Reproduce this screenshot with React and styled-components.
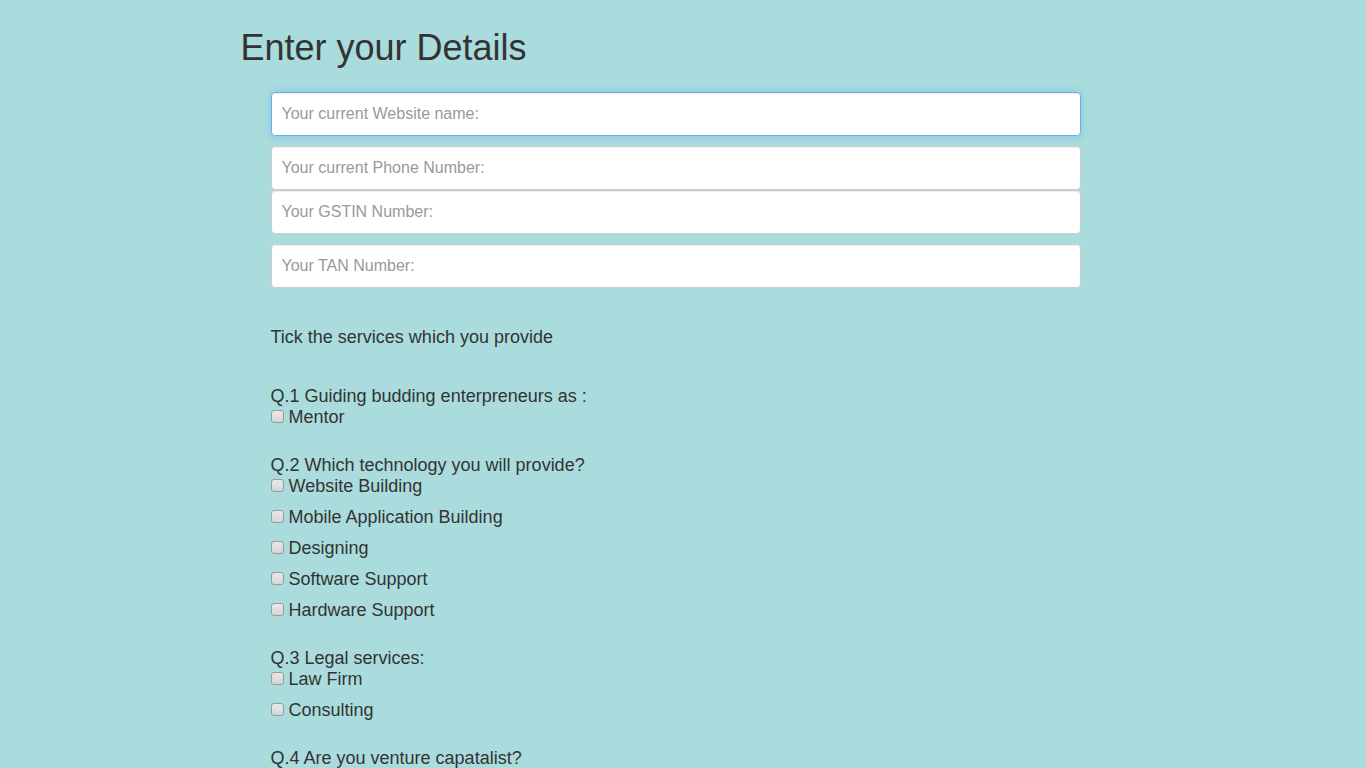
import React from "react";
import styled, { createGlobalStyle, css } from "styled-components";

const GlobalStyle = createGlobalStyle`
  html, body {
    margin: 0;
    padding: 0;
    background: #aadcdd;
  }
  body {
    padding-right: 15px;
    font-family: "Liberation Sans", Arial, Helvetica, sans-serif;
    color: #333333;
  }
  * { box-sizing: border-box; }
`;

const Page = styled.div`
  width: 870px;
  margin: 0 auto;
  padding-bottom: 1080px;
`;

const Title = styled.h1`
  margin: 28px 0 24px 0;
  font-size: 36px;
  font-weight: 400;
  line-height: 39.6px;
  color: #333333;
`;

const Form = styled.form`
  display: flex;
  flex-direction: column;
  padding: 0 30px;
`;

const Field = styled.input`
  display: block;
  width: 100%;
  height: 44px;
  margin: 0 0 ${(p) => p.$gap}px 0;
  padding: 10px 10px;
  font-family: "Liberation Sans", Arial, sans-serif;
  font-size: 16px;
  color: #555555;
  background: #ffffff;
  border: 1px solid #cccccc;
  border-radius: 4px;
  box-shadow: inset 0 1px 1px rgba(0, 0, 0, 0.075);
  outline: none;
  &::placeholder {
    color: #999999;
  }
  ${(p) =>
    p.$focused &&
    css`
      border-color: #66afe9;
      box-shadow: inset 0 1px 1px rgba(0, 0, 0, 0.075),
        0 0 8px rgba(102, 175, 233, 0.6);
    `}
`;

const Intro = styled.p`
  margin: 39px 0 38px 0;
  font-size: 18px;
  line-height: 21px;
`;

const Question = styled.div`
  display: flex;
  flex-direction: column;
  gap: 10px;
  margin-bottom: 27px;
`;

const QuestionText = styled.div`
  font-size: 18px;
  line-height: 21px;
  margin-bottom: -10px;
`;

const Option = styled.label`
  display: flex;
  align-items: center;
  font-size: 18px;
  line-height: 21px;
`;

const Box = styled.input.attrs({ type: "checkbox" })`
  appearance: none;
  -webkit-appearance: none;
  width: 13px;
  height: 13px;
  margin: 0 5px 2px 0;
  border: 1px solid #9a9a9a;
  border-radius: 3px;
  background: linear-gradient(#e8e8e8, #d6d6d6);
  flex: none;
`;

const Submit = styled.button`
  align-self: flex-start;
  padding: 10px 16px;
  font-family: "Liberation Sans", Arial, sans-serif;
  font-size: 18px;
  color: #ffffff;
  background: #337ab7;
  border: 1px solid #2e6da4;
  border-radius: 6px;
`;

const questions = [
  { q: "Q.1 Guiding budding enterpreneurs as :", opts: ["Mentor"] },
  {
    q: "Q.2 Which technology you will provide?",
    opts: [
      "Website Building",
      "Mobile Application Building",
      "Designing",
      "Software Support",
      "Hardware Support",
    ],
  },
  { q: "Q.3 Legal services:", opts: ["Law Firm", "Consulting"] },
  { q: "Q.4 Are you venture capatalist?", opts: ["Yes", "No"] },
];

export default function App() {
  return (
    <>
      <GlobalStyle />
      <Page>
        <Title>Enter your Details</Title>
        <Form onSubmit={(e) => e.preventDefault()}>
          <Field $focused $gap={10} placeholder="Your current Website name:" />
          <Field $gap={0} placeholder="Your current Phone Number:" />
          <Field $gap={10} placeholder="Your GSTIN Number:" />
          <Field $gap={0} placeholder="Your TAN Number:" />
          <Intro>Tick the services which you provide</Intro>
          {questions.map((item) => (
            <Question key={item.q}>
              <QuestionText>{item.q}</QuestionText>
              {item.opts.map((o) => (
                <Option key={o}>
                  <Box />
                  {o}
                </Option>
              ))}
            </Question>
          ))}
          <Submit type="submit">Submit</Submit>
        </Form>
      </Page>
    </>
  );
}
